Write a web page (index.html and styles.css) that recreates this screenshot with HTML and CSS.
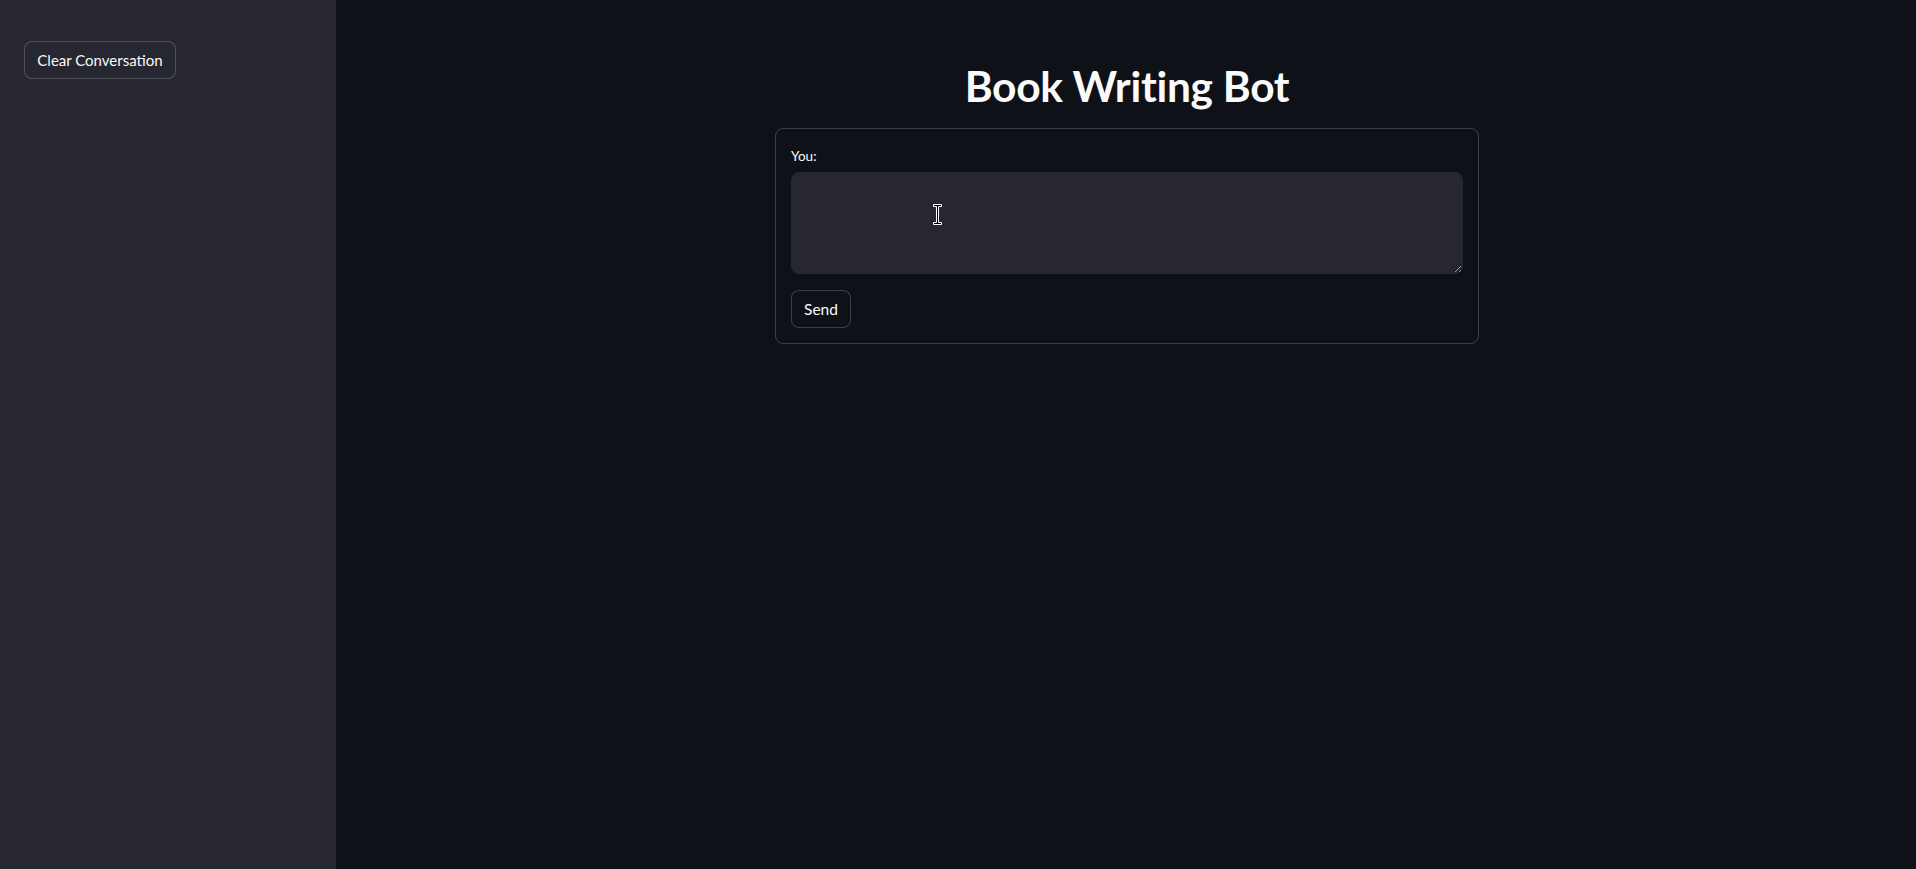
FILE: index.html
```html
<!DOCTYPE html>
<html>
<head>
<meta charset="utf-8">
<title>Book Writing Bot</title>
<link rel="stylesheet" href="styles.css">
</head>
<body>
<div class="app">
  <aside class="sidebar">
    <button class="btn btn-clear">Clear Conversation</button>
  </aside>
  <main class="main">
    <div class="block">
      <h1 class="title">Book Writing Bot</h1>
      <form class="form">
        <label class="label">You:</label>
        <div class="textarea-wrap">
          <textarea class="textarea"></textarea>
        </div>
        <div class="actions">
          <button type="button" class="btn btn-send">Send</button>
        </div>
      </form>
    </div>
  </main>
</div>
<svg class="cursor" width="9" height="21" viewBox="0 0 9 21">
  <path d="M0.5 0.5h8v2h-3v16h3v2h-8v-2h3v-16h-3z" fill="#000" stroke="#fff" stroke-width="1"/>
</svg>
</body>
</html>
```
FILE: styles.css
```css
html, body {
  margin: 0;
  padding: 0;
  height: 100%;
  background: #0e1117;
  font-family: Lato, "Noto Sans", sans-serif;
  color: #fafafa;
}
.app {
  display: flex;
  height: 869px;
}
.sidebar {
  width: 336px;
  flex: 0 0 336px;
  background: #262730;
  box-sizing: border-box;
  padding: 41px 24px;
}
.btn {
  display: inline-flex;
  align-items: center;
  justify-content: center;
  height: 38px;
  padding: 0 8px;
  border: 1px solid rgba(250, 250, 250, 0.2);
  border-radius: 8px;
  background: transparent;
  color: #fafafa;
  font-family: Lato, "Noto Sans", sans-serif;
  font-size: 15.5px;
  white-space: nowrap;
  box-sizing: border-box;
}
.btn-clear {
  width: 152px;
  font-size: 15px;
  background: #262730;
}
.main {
  flex: 1;
  display: flex;
  justify-content: center;
  padding-left: 2px;
}
.block {
  width: 704px;
  display: flex;
  flex-direction: column;
}
.title {
  margin: 0;
  padding-top: 60px;
  height: 68px;
  font-size: 42.5px;
  font-weight: 700;
  line-height: 52px;
  text-align: center;
  color: #fafafa;
  letter-spacing: -0.3px;
}
.form {
  border: 1px solid rgba(250, 250, 250, 0.2);
  border-radius: 8px;
  padding: 15px 15px 15px;
  display: flex;
  flex-direction: column;
}
.label {
  font-size: 13.5px;
  line-height: 18px;
  height: 18px;
  margin-top: 3px;
  margin-bottom: 7px;
  color: #fafafa;
}
.textarea {
  display: block;
  width: 672px;
  height: 102px;
  box-sizing: border-box;
  background: #262730;
  border: 1px solid #262730;
  border-radius: 8px;
  resize: vertical;
  color: #fafafa;
  font-family: Lato, "Noto Sans", sans-serif;
  outline: none;
  margin: 0;
}
.actions {
  margin-top: 16px;
}
.btn-send {
  width: 60px;
  background: #0e1117;
}
.cursor {
  position: absolute;
  left: 933px;
  top: 204px;
}
```
